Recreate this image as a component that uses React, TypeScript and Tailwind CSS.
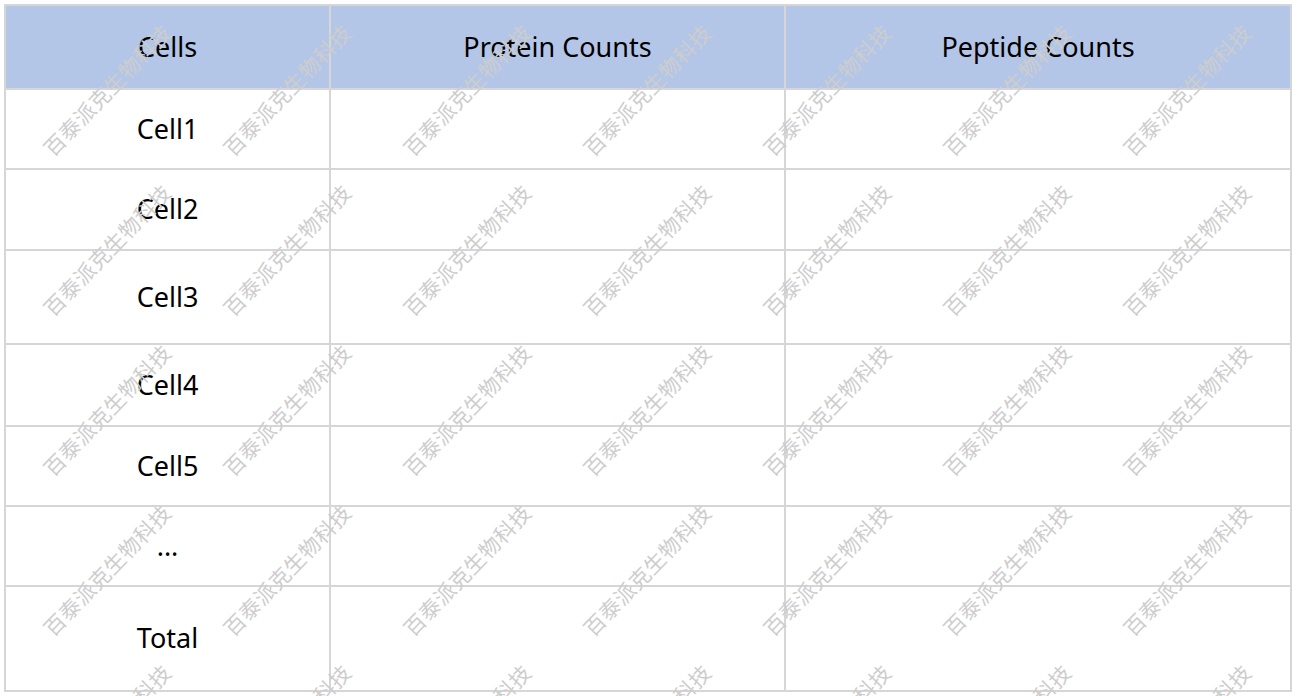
import React from "react";

const rows: { label: string; h: string }[] = [
  { label: "Cell1", h: "h-[80px]" },
  { label: "Cell2", h: "h-[81px]" },
  { label: "Cell3", h: "h-[94px]" },
  { label: "Cell4", h: "h-[82px]" },
  { label: "Cell5", h: "h-[80px]" },
  { label: "...", h: "h-[80px]" },
  { label: "Total", h: "h-[105px]" },
];

function Watermarks() {
  const marks: { x: number; y: number }[] = [];
  for (let j = 0; j < 5; j++) {
    for (let i = 0; i < 7; i++) {
      marks.push({ x: 107 + 180 * i, y: 90 + 160 * j });
    }
  }
  return (
    <div className="pointer-events-none absolute inset-0 overflow-hidden">
      {marks.map((m, k) => (
        <span
          key={k}
          className="absolute whitespace-nowrap text-[21px] leading-none tracking-[0.5px] text-[#cdcdcd]"
          style={{
            left: m.x,
            top: m.y,
            transform: "translate(-50%, -50%) rotate(-46deg)",
            fontFamily: '"Noto Sans CJK SC", sans-serif',
          }}
        >
          百泰派克生物科技
        </span>
      ))}
    </div>
  );
}

export default function App() {
  return (
    <div
      className="relative h-[696px] w-[1297px] overflow-hidden bg-white pl-[4px] pt-[4px]"
      style={{ fontFamily: '"Noto Sans", "Noto Sans CJK SC", sans-serif' }}
    >
      <table className="w-[1286px] table-fixed border-collapse border-2 border-[#d6d6d6] text-[27px] text-black">
        <colgroup>
          <col className="w-[325px]" />
          <col className="w-[455px]" />
          <col className="w-[506px]" />
        </colgroup>
        <thead>
          <tr className="h-[84px] bg-[#b4c6e7]">
            <th className="border-2 border-[#d6d6d6] text-center font-normal">Cells</th>
            <th className="border-2 border-[#d6d6d6] text-center font-normal">Protein Counts</th>
            <th className="border-2 border-[#d6d6d6] text-center font-normal">Peptide Counts</th>
          </tr>
        </thead>
        <tbody>
          {rows.map((r) => (
            <tr key={r.label} className={r.h}>
              <td className="border-2 border-[#d6d6d6] text-center">{r.label}</td>
              <td className="border-2 border-[#d6d6d6]"></td>
              <td className="border-2 border-[#d6d6d6]"></td>
            </tr>
          ))}
        </tbody>
      </table>
      <Watermarks />
    </div>
  );
}
